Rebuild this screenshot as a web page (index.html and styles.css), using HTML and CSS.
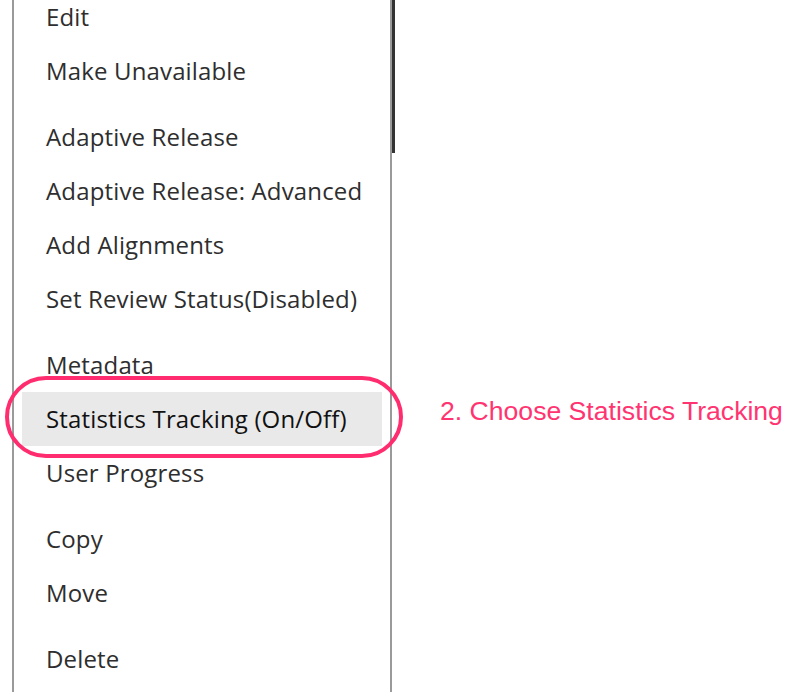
FILE: index.html
```html
<!DOCTYPE html>
<html lang="en">
<head>
  <meta charset="UTF-8" />
  <title>Item menu</title>
  <link rel="stylesheet" href="styles.css">
</head>
<body>
  <div class="menu">
    <ul class="group">
      <li>Edit</li>
      <li>Make Unavailable</li>
    </ul>
    <ul class="group">
      <li>Adaptive Release</li>
      <li>Adaptive Release: Advanced</li>
      <li>Add Alignments</li>
      <li>Set Review Status(Disabled)</li>
    </ul>
    <ul class="group">
      <li>Metadata</li>
      <li class="active">Statistics Tracking (On/Off)</li>
      <li>User Progress</li>
    </ul>
    <ul class="group">
      <li>Copy</li>
      <li>Move</li>
    </ul>
    <ul class="group">
      <li>Delete</li>
    </ul>
    <div class="scrollbar"></div>
  </div>

  <!-- annotation -->
  <div class="ring"></div>
  <div class="note">2. Choose Statistics Tracking</div>
</body>
</html>
```

FILE: styles.css
```css
* {
  box-sizing: border-box;
  margin: 0;
  padding: 0;
}

body {
  background: #fff;
  height: 692px;
  overflow: hidden;
  position: relative;
  font-family: 'Open Sans', sans-serif;
}

.menu {
  position: relative;
  margin-left: 12px;
  width: 380px;
  height: 710px;
  border-left: 2px solid #9a9a9a;
  border-right: 2px solid #9a9a9a;
  margin-top: -10px;
}

.group {
  list-style: none;
  margin-bottom: 12px;
}

.group li {
  height: 54px;
  line-height: 54px;
  margin: 0 8px;
  padding-left: 24px;
  font-size: 24px;
  letter-spacing: 0.15px;
  color: #2e2e2e;
  white-space: nowrap;
}

.group li.active {
  background-color: #e9e9e9;
  color: #111;
}

.scrollbar {
  position: absolute;
  top: 0;
  right: -5px;
  width: 3px;
  height: 163px;
  background: #333;
}

.ring {
  position: absolute;
  left: 5px;
  top: 376px;
  width: 398px;
  height: 82px;
  border: 4px solid #ff2d6f;
  border-radius: 41px;
}

.note {
  position: absolute;
  left: 440px;
  top: 396px;
  font-family: 'Liberation Sans', Arial, sans-serif;
  font-size: 26.6px;
  color: #ff3470;
}
```
